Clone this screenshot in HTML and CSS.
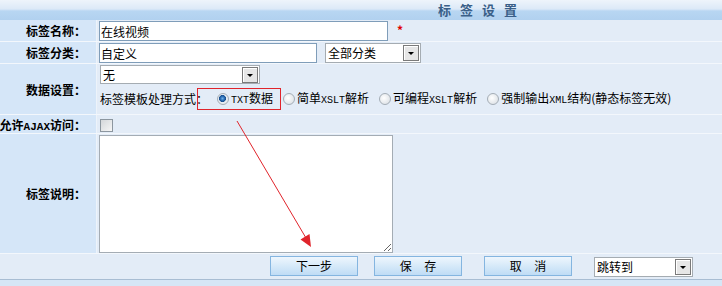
FILE: index.html
```html
<!DOCTYPE html>
<html lang="zh-CN">
<head>
  <meta charset="UTF-8" />
  <title>标签设置</title>
  <link rel="stylesheet" href="styles.css">
</head>
<body>
  <div class="page">
    <div class="title">标签设置</div>

    <div class="row row-name">
      <div class="label"><span>标签名称：</span></div>
      <div class="value">
        <input class="text w-name" type="text" value="在线视频">
        <span class="req">*</span>
      </div>
    </div>

    <div class="row row-cat">
      <div class="label"><span>标签分类：</span></div>
      <div class="value">
        <input class="text w-cat" type="text" value="自定义">
        <span class="select w-catsel">全部分类<span class="drop"></span></span>
      </div>
    </div>

    <div class="row row-data">
      <div class="label"><span>数据设置：</span></div>
      <div class="value">
        <span class="select w-data">无<span class="drop"></span></span>
        <div class="modes">
          <span class="mode-label">标签模板处理方式：</span>
          <span class="radio checked first"></span><span><span class="en">TXT</span>数据</span>
          <span class="radio"></span><span>简单<span class="en">XSLT</span>解析</span>
          <span class="radio"></span><span>可编程<span class="en">XSLT</span>解析</span>
          <span class="radio"></span><span>强制输出<span class="en">XML</span>结构(静态标签无效)</span>
        </div>
      </div>
    </div>

    <div class="row row-ajax">
      <div class="label"><span>允许<span class="en-b">AJAX</span>访问：</span></div>
      <div class="value">
        <span class="check"></span>
      </div>
    </div>

    <div class="row row-desc">
      <div class="label"><span>标签说明：</span></div>
      <div class="value">
        <textarea class="desc"></textarea>
      </div>
    </div>

    <div class="footer">
      <button class="btn btn-next">下一步</button>
      <button class="btn btn-save">保 存</button>
      <button class="btn btn-cancel">取 消</button>
      <span class="select w-jump">跳转到<span class="drop"></span></span>
    </div>
    <div class="bottom"></div>

    <!-- 标注：红框和箭头 -->
    <svg class="mark" width="722" height="286" viewBox="0 0 722 286">
      <rect x="197.5" y="88.5" width="83" height="21" fill="none" stroke="#e0242b" stroke-width="1"/>
      <line x1="237" y1="121" x2="306" y2="238" stroke="#e0242b" stroke-width="1"/>
      <polygon points="311,247 300.5,239.5 309.5,234" fill="#e0242b"/>
    </svg>
  </div>
</body>
</html>
```

FILE: styles.css
```css
* {
  box-sizing: border-box;
  margin: 0;
  padding: 0;
}
body {
  background: #d6e6f6;
  font-family: 'Noto Sans CJK SC', 'DejaVu Sans', sans-serif;
  font-size: 12px;
  color: #000;
}
.page {
  position: relative;
  width: 722px;
  height: 286px;
  overflow: hidden;
}
.title {
  height: 20px;
  padding-left: 438px;
  line-height: 19px;
  font-size: 13px;
  font-weight: bold;
  letter-spacing: 9px;
  color: #3a5f88;
  background: linear-gradient(#eef4fb 0, #dce9f7 9px, #b8d6f2 11px, #b1d1ef 20px);
}
.row {
  display: grid;
  grid-template-columns: 97px 1fr;
  border-bottom: 1px solid #f3f7fc;
}
.label {
  display: flex;
  align-items: center;
  justify-content: flex-end;
  padding-right: 10px;
  white-space: nowrap;
  font-weight: bold;
  background: #d5e6f8;
  border-right: 1px solid #edf3fa;
}
.en-b {
  font-family: 'Liberation Mono', monospace;
  font-size: 11px;
  font-weight: bold;
}
.value {
  background: #e3ecf7;
  padding: 1px 0 0 2px;
  display: flex;
  align-items: flex-start;
}
.row-name .value, .row-cat .value { height: 21px; }
.row-data .value {
  height: 50px;
  flex-direction: column;
}
.row-ajax .value {
  height: 18px;
  align-items: center;
  padding-top: 3px;
}
.row-desc .value { height: 119px; }

.text {
  height: 20px;
  border: 1px solid #7f9db9;
  background: #fff;
  padding: 0 1px;
  font-family: inherit;
  font-size: 12px;
  line-height: 18px;
  outline: none;
}
.w-name { width: 289px; }
.w-cat { width: 218px; }
.req {
  color: #e00000;
  margin-left: 9px;
  line-height: 18px;
  font-weight: bold;
}

.select {
  position: relative;
  display: inline-block;
  height: 20px;
  border: 1px solid #a5acb2;
  background: #fff;
  padding-left: 2px;
  line-height: 18px;
  white-space: nowrap;
}
.drop {
  position: absolute;
  right: 1px;
  top: 1px;
  width: 16px;
  height: 16px;
  border: 1px solid #7a7a7a;
  background: #e6e6e6;
  box-shadow: inset 1px 1px 0 #fff;
}
.drop::after {
  content: "";
  position: absolute;
  left: 4px;
  top: 6px;
  border-left: 3px solid transparent;
  border-right: 3px solid transparent;
  border-top: 3px solid #000;
}
.w-catsel { width: 96px; margin-left: 8px; }
.w-data { width: 160px; height: 19px; margin-left: 1px; line-height: 17px; }
.w-jump { width: 99px; margin-left: 22px; margin-top: 1px; }

.modes {
  display: flex;
  align-items: center;
  height: 22px;
  margin-top: 4px;
  margin-left: 1px;
  white-space: nowrap;
  line-height: 22px;
}
.en {
  font-family: 'Liberation Mono', monospace;
  font-size: 10px;
}
.radio {
  display: inline-block;
  width: 12px;
  height: 12px;
  margin: 0 2px 0 10px;
  border: 1px solid #a4adb6;
  border-radius: 50%;
  background: radial-gradient(circle at 40% 40%, #ffffff 0, #e2e6ea 70%, #c9ced4 100%);
}
.radio.first { margin-left: 9px; }
.radio.checked {
  background: radial-gradient(circle at 45% 45%, #6fb0e8 0, #1d5fa8 2.5px, #1a4f8e 3.2px, #e9eef3 3.8px, #dfe4e9 100%);
}

.check {
  display: inline-block;
  width: 13px;
  height: 13px;
  margin-left: 1px;
  border: 1px solid #8c969f;
  background: linear-gradient(135deg, #d4d7da, #f6f6f6);
}

.desc {
  width: 294px;
  height: 118px;
  border: 1px solid #a4acb4;
  background: #fff;
  outline: none;
  font-family: inherit;
  font-size: 12px;
}

.footer {
  display: flex;
  align-items: flex-start;
  height: 26px;
  padding: 2px 0 0 270px;
  background: #e3ecf7;
  border-bottom: 1px solid #a8bdd3;
}
.btn {
  width: 88px;
  height: 20px;
  border: 1px solid #84b5e0;
  background: linear-gradient(#eef6fd, #d6e9f9 50%, #bfdcf5);
  font-family: inherit;
  font-size: 12px;
  line-height: 18px;
  color: #000;
  word-spacing: 10px;
  cursor: pointer;
}
.btn-save { margin-left: 16px; }
.btn-cancel { margin-left: 22px; }
.bottom {
  height: 7px;
  background: #d6e6f6;
}

.mark {
  position: absolute;
  left: 0;
  top: 0;
  pointer-events: none;
}
```
